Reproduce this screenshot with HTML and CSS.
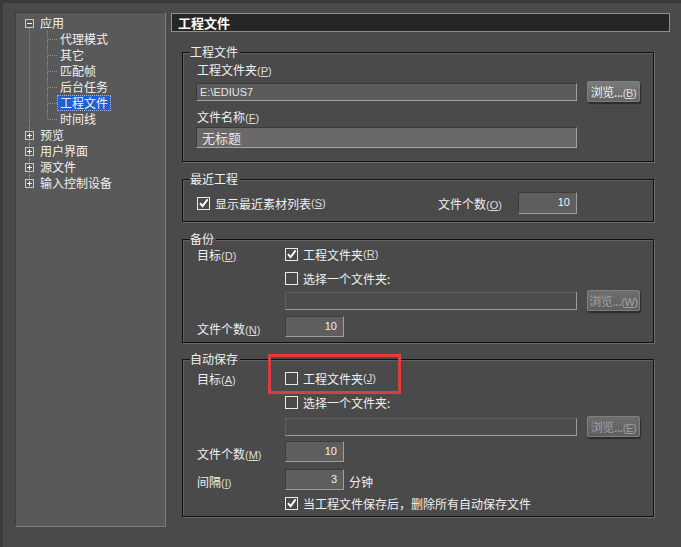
FILE: index.html
```html
<!DOCTYPE html>
<html lang="zh-CN">
<head>
  <meta charset="UTF-8">
  <title>用户设置 - 工程文件</title>
  <link rel="stylesheet" href="styles.css">
</head>
<body>
<div class="app">
  <div class="tree">
    <ul class="roots">
      <li>
        <div class="row"><span class="toggle"><svg width="9" height="9" viewBox="0 0 9 9"><rect x="0.5" y="0.5" width="8" height="8" fill="#585858" stroke="#c8c8c8"/><path d="M2 4.5h5" stroke="#f0f0f0"/></svg></span><span class="node">应用</span></div>
        <ul class="children">
          <li><span class="node">代理模式</span></li>
          <li><span class="node">其它</span></li>
          <li><span class="node">匹配帧</span></li>
          <li><span class="node">后台任务</span></li>
          <li><span class="node selected">工程文件</span></li>
          <li><span class="node">时间线</span></li>
        </ul>
      </li>
      <li>
        <div class="row"><span class="toggle"><svg width="9" height="9" viewBox="0 0 9 9"><rect x="0.5" y="0.5" width="8" height="8" fill="#585858" stroke="#c8c8c8"/><path d="M2 4.5h5M4.5 2v5" stroke="#f0f0f0"/></svg></span><span class="node">预览</span></div>
      </li>
      <li>
        <div class="row"><span class="toggle"><svg width="9" height="9" viewBox="0 0 9 9"><rect x="0.5" y="0.5" width="8" height="8" fill="#585858" stroke="#c8c8c8"/><path d="M2 4.5h5M4.5 2v5" stroke="#f0f0f0"/></svg></span><span class="node">用户界面</span></div>
      </li>
      <li>
        <div class="row"><span class="toggle"><svg width="9" height="9" viewBox="0 0 9 9"><rect x="0.5" y="0.5" width="8" height="8" fill="#585858" stroke="#c8c8c8"/><path d="M2 4.5h5M4.5 2v5" stroke="#f0f0f0"/></svg></span><span class="node">源文件</span></div>
      </li>
      <li>
        <div class="row"><span class="toggle"><svg width="9" height="9" viewBox="0 0 9 9"><rect x="0.5" y="0.5" width="8" height="8" fill="#585858" stroke="#c8c8c8"/><path d="M2 4.5h5M4.5 2v5" stroke="#f0f0f0"/></svg></span><span class="node">输入控制设备</span></div>
      </li>
    </ul>
  </div>

  <div class="main">
    <div class="page-title">工程文件</div>

    <fieldset class="group group-project">
      <legend>工程文件</legend>
      <div class="group-body">
        <div class="label-row">工程文件夹<span class="key">(<u>P</u>)</span></div>
        <div class="field-row">
          <div class="textbox path">E:\EDIUS7</div>
          <button class="browse">浏览...<span class="key">(<u>B</u>)</span></button>
        </div>
        <div class="label-row gap7">文件名称<span class="key">(<u>F</u>)</span></div>
        <div class="textbox name">无标题</div>
      </div>
    </fieldset>

    <fieldset class="group group-recent">
      <legend>最近工程</legend>
      <div class="group-body">
        <div class="recent-row">
          <label class="check"><span class="box checked"><svg width="13" height="13" viewBox="0 0 13 13"><rect x="0.5" y="0.5" width="12" height="12" fill="none" stroke="#eaeaea"/><path d="M3 6.2l2.6 3L10.6 2.4" fill="none" stroke="#fff" stroke-width="2"/></svg></span>显示最近素材列表<span class="key">(<u>S</u>)</span></label>
          <span>文件个数<span class="key">(<u>O</u>)</span></span>
          <div class="numbox">10</div>
        </div>
      </div>
    </fieldset>

    <fieldset class="group group-backup">
      <legend>备份</legend>
      <div class="group-body">
        <div class="opt-row">
          <span class="opt-label">目标<span class="key">(<u>D</u>)</span></span>
          <label class="check"><span class="box checked"><svg width="13" height="13" viewBox="0 0 13 13"><rect x="0.5" y="0.5" width="12" height="12" fill="none" stroke="#eaeaea"/><path d="M3 6.2l2.6 3L10.6 2.4" fill="none" stroke="#fff" stroke-width="2"/></svg></span>工程文件夹<span class="key">(<u>R</u>)</span></label>
        </div>
        <div class="opt-row indent gap8">
          <label class="check"><span class="box"><svg width="13" height="13" viewBox="0 0 13 13"><rect x="0.5" y="0.5" width="12" height="12" fill="none" stroke="#eaeaea"/></svg></span>选择一个文件夹:</label>
        </div>
        <div class="opt-row indent path-row gap4">
          <div class="textbox empty"></div>
          <button class="browse" disabled>浏览...<span class="key">(<u>W</u>)</span></button>
        </div>
        <div class="opt-row num-row gap5">
          <span class="opt-label">文件个数<span class="key">(<u>N</u>)</span></span>
          <div class="numbox">10</div>
        </div>
      </div>
    </fieldset>

    <fieldset class="group group-autosave">
      <legend>自动保存</legend>
      <div class="group-body">
        <div class="opt-row marked">
          <span class="opt-label">目标<span class="key">(<u>A</u>)</span></span>
          <label class="check"><span class="box"><svg width="13" height="13" viewBox="0 0 13 13"><rect x="0.5" y="0.5" width="12" height="12" fill="none" stroke="#eaeaea"/></svg></span>工程文件夹<span class="key">(<u>J</u>)</span></label>
          <span class="highlight"></span>
        </div>
        <div class="opt-row indent gap8">
          <label class="check"><span class="box"><svg width="13" height="13" viewBox="0 0 13 13"><rect x="0.5" y="0.5" width="12" height="12" fill="none" stroke="#eaeaea"/></svg></span>选择一个文件夹:</label>
        </div>
        <div class="opt-row indent path-row gap6">
          <div class="textbox empty"></div>
          <button class="browse" disabled>浏览...<span class="key">(<u>E</u>)</span></button>
        </div>
        <div class="opt-row num-row gap4">
          <span class="opt-label">文件个数<span class="key">(<u>M</u>)</span></span>
          <div class="numbox">10</div>
        </div>
        <div class="opt-row num-row gap7">
          <span class="opt-label">间隔<span class="key">(<u>I</u>)</span></span>
          <div class="numbox">3</div>
          <span class="unit">分钟</span>
        </div>
        <div class="opt-row indent gap5">
          <label class="check"><span class="box checked"><svg width="13" height="13" viewBox="0 0 13 13"><rect x="0.5" y="0.5" width="12" height="12" fill="none" stroke="#eaeaea"/><path d="M3 6.2l2.6 3L10.6 2.4" fill="none" stroke="#fff" stroke-width="2"/></svg></span>当工程文件保存后，删除所有自动保存文件</label>
        </div>
      </div>
    </fieldset>
  </div>
</div>
</body>
</html>
```

FILE: styles.css
```css
html, body {
  margin: 0;
  padding: 0;
}

body {
  width: 681px;
  height: 547px;
  overflow: hidden;
  background-color: #4a4a4a;
  color: #f0f0f0;
  font-family: "Noto Sans CJK SC", "Liberation Sans", sans-serif;
  font-size: 12px;
}

.app {
  display: flex;
  align-items: flex-start;
  box-sizing: border-box;
  height: 547px;
  padding: 9px 0 0 12px;
  border-top: 3px solid #3a3a3a;
  border-left: 3px solid #3c3c3c;
}

/* left tree */
.tree {
  box-sizing: border-box;
  width: 151px;
  height: 515px;
  padding-top: 2px;
  background-color: #595959;
  border: 1px solid;
  border-color: #404040 #7c7c7c #7c7c7c #404040;
}

.tree ul {
  list-style: none;
  margin: 0;
  padding: 0;
}

.roots > li {
  position: relative;
}

.roots > li::before {
  content: '';
  position: absolute;
  left: 13px;
  top: 0;
  bottom: 0;
  border-left: 1px dotted #8c8c8c;
}

.roots > li:first-child::before {
  top: 8px;
}

.roots > li:last-child::before {
  bottom: auto;
  height: 8px;
}

.tree .row {
  position: relative;
  display: flex;
  align-items: center;
  height: 16px;
  padding-left: 9px;
}

.toggle {
  display: flex;
  margin-right: 4px;
}

.node {
  display: inline-block;
  padding: 0 2px;
  line-height: 14px;
  border: 1px solid transparent;
  margin-left: -1px;
}

.node.selected {
  background-color: #1f5fd2;
  border: 1px dotted #9cb8ea;
}

.children > li {
  position: relative;
  display: flex;
  align-items: center;
  height: 16px;
  padding-left: 42px;
}

.children > li::before {
  content: '';
  position: absolute;
  left: 31px;
  top: 0;
  bottom: 0;
  border-left: 1px dotted #8c8c8c;
}

.children > li:last-child::before {
  bottom: auto;
  height: 8px;
}

.children > li::after {
  content: '';
  position: absolute;
  left: 32px;
  top: 8px;
  width: 9px;
  border-top: 1px dotted #8c8c8c;
}

/* right side */
.main {
  margin-left: 5px;
  padding-top: 1px;
  width: 499px;
}

.page-title {
  box-sizing: border-box;
  height: 19px;
  line-height: 17px;
  padding-left: 6px;
  background-color: #262626;
  border: 1px solid #8e8e8e;
  font-size: 13px;
  font-weight: bold;
  color: #fff;
}

.group {
  box-sizing: border-box;
  width: 472px;
  margin: 10px 0 0 11px;
  padding: 0;
  min-width: 0;
  border: 1px solid #111;
  box-shadow: 1px 1px 0 #6c6c6c, inset 1px 1px 0 #606060;
}

.group-project {
  margin-top: 13px;
}

.group-autosave {
  margin-top: 9px;
}

.group legend {
  margin-left: 7px;
  padding: 0 2px 0 0;
  line-height: 14px;
  background-color: #4a4a4a;
}

.group-body {
  padding: 0 0 5px 14px;
}

.group-project .group-body {
  padding: 3px 0 13px 13px;
}

.group-recent .group-body {
  padding: 6px 0 7px 14px;
}

.group-autosave .group-body {
  padding-top: 4px;
}

.key {
  font-family: "Liberation Sans", sans-serif;
  font-size: 11px;
  color: #dcdcdc;
}

.label-row {
  height: 16px;
  line-height: 16px;
  padding-left: 1px;
}

.gap4 { margin-top: 4px; }
.gap5 { margin-top: 5px; }
.gap6 { margin-top: 6px; }
.gap7 { margin-top: 7px; }
.gap8 { margin-top: 8px; }

.field-row {
  display: flex;
  align-items: center;
  gap: 10px;
  height: 21px;
  margin-top: 3px;
}

.textbox {
  box-sizing: border-box;
  background-color: #5b5b5b;
  border: 1px solid;
  border-color: #3a3a3a #a2a2a2 #a2a2a2 #3a3a3a;
  padding-left: 3px;
  color: #e6e6e6;
}

.textbox.path {
  width: 381px;
  height: 18px;
  line-height: 16px;
  font-family: "Liberation Sans", sans-serif;
  font-size: 11px;
}

.textbox.name {
  width: 381px;
  height: 21px;
  margin-top: 2px;
  line-height: 19px;
  padding-left: 5px;
  background-color: #696969;
  font-size: 13px;
}

.textbox.empty {
  width: 292px;
  height: 18px;
  background-color: #4c4c4c;
  border-color: #5e5e5e #9c9c9c #9c9c9c #5e5e5e;
}

.browse {
  box-sizing: border-box;
  width: 53px;
  height: 21px;
  padding: 0;
  font-family: inherit;
  font-size: 12px;
  letter-spacing: -0.4px;
  white-space: nowrap;
  color: #f0f0f0;
  background: linear-gradient(#7a7a7a, #666);
  border: 1px solid #808080;
  border-radius: 2px;
  box-shadow: 1px 2px 1px #2c2c2c;
}

.browse:disabled {
  color: #a0a0a0;
  background: linear-gradient(#6e6e6e, #5e5e5e);
}

.browse:disabled .key {
  color: #a0a0a0;
}

.check {
  display: inline-flex;
  align-items: center;
  white-space: nowrap;
}

.box {
  display: flex;
  margin-right: 5px;
}

.numbox {
  box-sizing: border-box;
  width: 59px;
  height: 21px;
  padding-right: 6px;
  line-height: 19px;
  text-align: right;
  font-family: "Liberation Sans", sans-serif;
  font-size: 11px;
  background-color: #5e5e5e;
  border: 1px solid;
  border-color: #3c3c3c #9e9e9e #9e9e9e #3c3c3c;
}

.recent-row {
  display: grid;
  grid-template-columns: 241px 80px 59px;
  align-items: center;
  height: 22px;
}

.recent-row .numbox {
  height: 22px;
}

.opt-row {
  display: flex;
  align-items: center;
  height: 16px;
}

.opt-row.indent {
  padding-left: 88px;
}

.opt-label {
  width: 88px;
  flex-shrink: 0;
}

.path-row {
  gap: 10px;
  height: 21px;
}

.num-row {
  height: 21px;
}

.num-row .opt-label {
  padding-top: 4px;
}

.unit {
  margin-left: 5px;
  padding-top: 3px;
}

/* red annotation frame */
.marked {
  position: relative;
}

.highlight {
  position: absolute;
  left: 71px;
  top: -16px;
  width: 133px;
  height: 40px;
  box-sizing: border-box;
  border: 3px solid #e03c3c;
}
```
